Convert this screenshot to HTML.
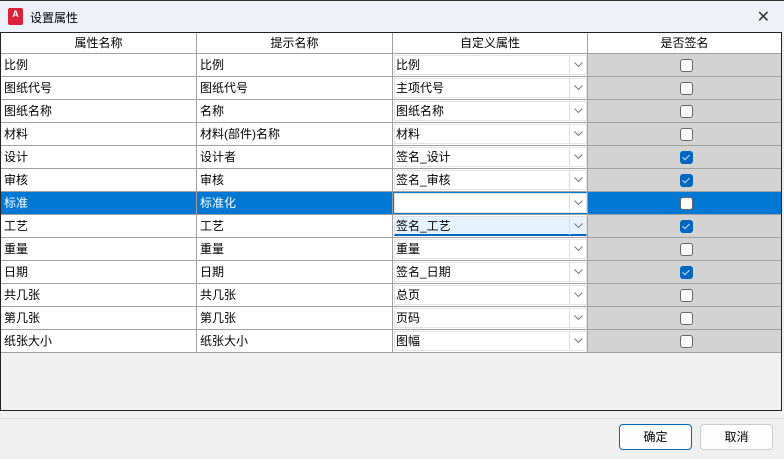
<!DOCTYPE html>
<html><head><meta charset="utf-8"><style>
*{box-sizing:border-box;margin:0;padding:0}
body{width:784px;height:459px;overflow:hidden;background:#f0f0f0;font-family:"Liberation Sans","Noto Sans CJK SC",sans-serif;font-size:12px;color:#000;position:relative}
.title{position:absolute;left:0;top:0;width:784px;height:32px;background:#eef1f8;border-top:1px solid #333}
.title .t{position:absolute;left:30px;top:8px;font-size:12px}
.logo{position:absolute;left:8px;top:7px;width:15px;height:17px;background:#d9213a;border-radius:2px;color:#fff;font-size:9px;font-weight:bold;text-align:center;line-height:12px}
.close{position:absolute;right:14px;top:6px;font-size:16px;color:#333}
.grid{position:absolute;left:0;top:32px;width:782px;height:379px;border:1px solid #222;background:#f0f0f0}
.row{position:absolute;left:0;height:23px;width:780px;border-bottom:1px solid #a0a0a0}
.c{position:absolute;top:0;height:22px;line-height:22px;padding-left:3px;border-right:1px solid #a0a0a0;background:#fff;white-space:nowrap}
.c1{left:0;width:196px}.c2{left:196px;width:196px}.c3{left:392px;width:195px;padding-left:2px}.c4{left:587px;width:193px;background:#d3d3d3;border-right:none}
.hdr .c{text-align:center;padding:0;height:20px;line-height:20px}
.hdr{height:21px}
.sel .c1,.sel .c2,.sel .c4{background:#0078d4;color:#fff}
.combo{position:absolute;left:1px;top:1px;width:193px;height:20px;background:#fff;border:1px solid #e4e4e4;line-height:18px;padding-left:1px}
.combo .dd{position:absolute;right:0;top:0;width:17px;height:18px;border-left:1px solid #ddd}
.combo .dd svg{position:absolute;left:4px;top:6px}
.combo.act{background:#e5f1fb;border-color:#e0e0e0;border-bottom:2px solid #0067c0}
.cb{position:absolute;left:92px;top:5px;width:13px;height:13px;border:1px solid #666;border-radius:3px;background:#fbfbfb}
.cb.on{background:#0067c0;border-color:#0067c0}
.cb.on:after{content:"";position:absolute;left:3px;top:1px;width:3px;height:6px;border:solid #cfe0f4;border-width:0 1px 1px 0;transform:rotate(45deg)}
.sep{position:absolute;left:0;top:418px;width:784px;border-top:1px solid #ddd}
.btn{position:absolute;top:424px;width:73px;height:26px;border:1px solid #ccc;border-radius:4px;background:#fdfdfd;text-align:center;line-height:24px}
.btn.p{border-color:#0067c0}
</style></head><body>
<svg width="0" height="0" style="position:absolute"><defs><symbol id="chev" viewBox="0 0 9 5"><path d="M0.5 0.5L4.5 4.5L8.5 0.5" fill="none" stroke="#777" stroke-width="1"/></symbol></defs></svg>
<div class="title"><div class="logo">A</div><div class="t">设置属性</div><div class="close">✕</div></div>
<div class="grid">
<div class="row hdr" style="top:0"><div class="c c1">属性名称</div><div class="c c2">提示名称</div><div class="c c3">自定义属性</div><div class="c c4" style="background:#fff">是否签名</div></div>
<div class="row" style="top:21px"><div class="c c1">比例</div><div class="c c2">比例</div><div class="c c3"><div class="combo">比例<div class="dd"><svg width="9" height="5"><use href="#chev"/></svg></div></div></div><div class="c c4"><div class="cb"></div></div></div>
<div class="row" style="top:44px"><div class="c c1">图纸代号</div><div class="c c2">图纸代号</div><div class="c c3"><div class="combo">主项代号<div class="dd"><svg width="9" height="5"><use href="#chev"/></svg></div></div></div><div class="c c4"><div class="cb"></div></div></div>
<div class="row" style="top:67px"><div class="c c1">图纸名称</div><div class="c c2">名称</div><div class="c c3"><div class="combo">图纸名称<div class="dd"><svg width="9" height="5"><use href="#chev"/></svg></div></div></div><div class="c c4"><div class="cb"></div></div></div>
<div class="row" style="top:90px"><div class="c c1">材料</div><div class="c c2">材料(部件)名称</div><div class="c c3"><div class="combo">材料<div class="dd"><svg width="9" height="5"><use href="#chev"/></svg></div></div></div><div class="c c4"><div class="cb"></div></div></div>
<div class="row" style="top:113px"><div class="c c1">设计</div><div class="c c2">设计者</div><div class="c c3"><div class="combo">签名_设计<div class="dd"><svg width="9" height="5"><use href="#chev"/></svg></div></div></div><div class="c c4"><div class="cb on"></div></div></div>
<div class="row" style="top:136px"><div class="c c1">审核</div><div class="c c2">审核</div><div class="c c3"><div class="combo">签名_审核<div class="dd"><svg width="9" height="5"><use href="#chev"/></svg></div></div></div><div class="c c4"><div class="cb on"></div></div></div>
<div class="row sel" style="top:159px"><div class="c c1">标准</div><div class="c c2">标准化</div><div class="c c3" style="background:#0078d4"><div class="combo"><div class="dd"><svg width="9" height="5"><use href="#chev"/></svg></div></div></div><div class="c c4"><div class="cb"></div></div></div>
<div class="row" style="top:182px"><div class="c c1">工艺</div><div class="c c2">工艺</div><div class="c c3"><div class="combo act">签名_工艺<div class="dd"><svg width="9" height="5"><use href="#chev"/></svg></div></div></div><div class="c c4"><div class="cb on"></div></div></div>
<div class="row" style="top:205px"><div class="c c1">重量</div><div class="c c2">重量</div><div class="c c3"><div class="combo">重量<div class="dd"><svg width="9" height="5"><use href="#chev"/></svg></div></div></div><div class="c c4"><div class="cb"></div></div></div>
<div class="row" style="top:228px"><div class="c c1">日期</div><div class="c c2">日期</div><div class="c c3"><div class="combo">签名_日期<div class="dd"><svg width="9" height="5"><use href="#chev"/></svg></div></div></div><div class="c c4"><div class="cb on"></div></div></div>
<div class="row" style="top:251px"><div class="c c1">共几张</div><div class="c c2">共几张</div><div class="c c3"><div class="combo">总页<div class="dd"><svg width="9" height="5"><use href="#chev"/></svg></div></div></div><div class="c c4"><div class="cb"></div></div></div>
<div class="row" style="top:274px"><div class="c c1">第几张</div><div class="c c2">第几张</div><div class="c c3"><div class="combo">页码<div class="dd"><svg width="9" height="5"><use href="#chev"/></svg></div></div></div><div class="c c4"><div class="cb"></div></div></div>
<div class="row" style="top:297px"><div class="c c1">纸张大小</div><div class="c c2">纸张大小</div><div class="c c3"><div class="combo">图幅<div class="dd"><svg width="9" height="5"><use href="#chev"/></svg></div></div></div><div class="c c4"><div class="cb"></div></div></div>
</div>
<div class="sep"></div>
<div class="btn p" style="left:619px">确定</div>
<div class="btn" style="left:700px">取消</div>
</body></html>
